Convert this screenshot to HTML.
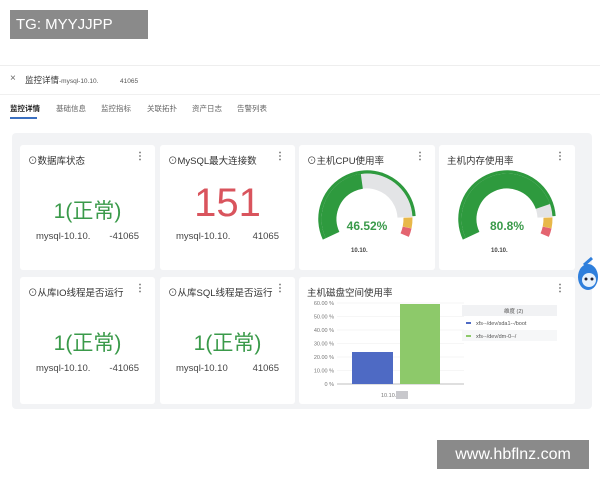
<!DOCTYPE html>
<html><head><meta charset="utf-8"><style>
*{margin:0;padding:0;box-sizing:border-box}
body{width:600px;height:480px;background:#fff;position:relative;overflow:hidden;font-family:"Liberation Sans","Noto Sans CJK SC",sans-serif;color:#333}
.a{position:absolute}
.card{position:absolute;background:#fff;border-radius:3px}
.t{position:absolute;left:8px;top:8px;font-size:9.5px;color:#333}
.dots{position:absolute;right:10px;top:6px;font-size:10px;color:#666;font-weight:bold}
.big{position:absolute;left:0;right:0;text-align:center;color:#3a9a4a;font-size:21px}
.sub{position:absolute;left:16px;right:16px;font-size:9.5px;color:#444;display:flex;justify-content:space-between}
</style></head><body>
<div class="a" style="left:10px;top:10px;width:138px;height:29px;background:#8a8a8a;color:#fff;font-size:15px;line-height:29px;padding-left:6px">TG: MYYJJPP</div>
<div class="a" style="left:0;top:65px;width:600px;height:1px;background:#eee"></div>
<div class="a" style="left:10px;top:73px;font-size:10px;color:#666">×</div>
<div class="a" style="left:25px;top:74px;font-size:8.5px;color:#333">监控详情<span style="font-size:6.5px;color:#555">-mysql-10.10. &nbsp; &nbsp; &nbsp; &nbsp; &nbsp; &nbsp;41065</span></div>
<div class="a" style="left:0;top:94px;width:600px;height:1px;background:#f0f0f0"></div>
<div class="a" style="left:10px;top:103px;font-size:7.5px;color:#222;font-weight:bold">监控详情</div>
<div class="a" style="left:10px;top:117px;width:27px;height:2px;background:#3a6fc0"></div>
<div class="a" style="left:56px;top:103px;font-size:7.5px;color:#666">基础信息</div>
<div class="a" style="left:101px;top:103px;font-size:7.5px;color:#666">监控指标</div>
<div class="a" style="left:147px;top:103px;font-size:7.5px;color:#666">关联拓扑</div>
<div class="a" style="left:192px;top:103px;font-size:7.5px;color:#666">资产日志</div>
<div class="a" style="left:237px;top:103px;font-size:7.5px;color:#666">告警列表</div>
<div class="a" style="left:12px;top:133px;width:580px;height:276px;background:#f2f3f5;border-radius:4px"></div>

<div class="card" style="left:20px;top:145px;width:135px;height:125px"><div class="t">⊙数据库状态</div><div class="dots">⋮</div><div class="big" style="top:50px">1(正常)</div><div class="sub" style="top:86px"><span>mysql-10.10.</span><span>-41065</span></div></div>
<div class="card" style="left:160px;top:145px;width:135px;height:125px"><div class="t">⊙MySQL最大连接数</div><div class="dots">⋮</div><div class="big" style="top:36px;font-size:40px;color:#d9545d">151</div><div class="sub" style="top:86px"><span>mysql-10.10.</span><span>41065</span></div></div>

<div class="card" style="left:299px;top:145px;width:136px;height:125px"><div class="t">⊙主机CPU使用率</div><div class="dots">⋮</div>
<svg class="a" style="left:0;top:0" width="136" height="125"><g transform="translate(68,74)">
<circle r="47" fill="none" stroke="#2e9a3e" stroke-width="3.5" stroke-dasharray="165 400" transform="rotate(155)"/>
<circle r="38" fill="none" stroke="#e3e4e6" stroke-width="15" stroke-dasharray="134 400" transform="rotate(155)"/>
<circle r="38" fill="none" stroke="#2e9a3e" stroke-width="15" stroke-dasharray="71 400" transform="rotate(155)"/>
<circle r="41" fill="none" stroke="#e8b84a" stroke-width="9" stroke-dasharray="10 400" transform="rotate(358)"/>
<circle r="41" fill="none" stroke="#e46470" stroke-width="9" stroke-dasharray="8 400" transform="rotate(372)"/>
</g><text x="68" y="85" text-anchor="middle" font-size="12" font-weight="bold" fill="#3a9a4a" font-family="Liberation Sans">46.52%</text>
<text x="52" y="107" font-size="6" fill="#444" font-weight="bold" font-family="Liberation Sans">10.10.</text></svg></div>

<div class="card" style="left:439px;top:145px;width:136px;height:125px"><div class="t">主机内存使用率</div><div class="dots">⋮</div>
<svg class="a" style="left:0;top:0" width="136" height="125"><g transform="translate(68,74)">
<circle r="47" fill="none" stroke="#2e9a3e" stroke-width="3.5" stroke-dasharray="165 400" transform="rotate(155)"/>
<circle r="38" fill="none" stroke="#e3e4e6" stroke-width="15" stroke-dasharray="134 400" transform="rotate(155)"/>
<circle r="38" fill="none" stroke="#2e9a3e" stroke-width="15" stroke-dasharray="123 400" transform="rotate(155)"/>
<circle r="41" fill="none" stroke="#e8b84a" stroke-width="9" stroke-dasharray="10 400" transform="rotate(358)"/>
<circle r="41" fill="none" stroke="#e46470" stroke-width="9" stroke-dasharray="8 400" transform="rotate(372)"/>
</g><text x="68" y="85" text-anchor="middle" font-size="12" font-weight="bold" fill="#3a9a4a" font-family="Liberation Sans">80.8%</text>
<text x="52" y="107" font-size="6" fill="#444" font-weight="bold" font-family="Liberation Sans">10.10.</text></svg></div>

<div class="card" style="left:20px;top:277px;width:135px;height:127px"><div class="t">⊙从库IO线程是否运行</div><div class="dots">⋮</div><div class="big" style="top:50px">1(正常)</div><div class="sub" style="top:86px"><span>mysql-10.10.</span><span>-41065</span></div></div>
<div class="card" style="left:160px;top:277px;width:135px;height:127px"><div class="t">⊙从库SQL线程是否运行</div><div class="dots">⋮</div><div class="big" style="top:50px">1(正常)</div><div class="sub" style="top:86px"><span>mysql-10.10</span><span>41065</span></div></div>

<div class="card" style="left:299px;top:277px;width:276px;height:127px"><div class="t">主机磁盘空间使用率</div><div class="dots">⋮</div>
<svg class="a" style="left:0;top:0" width="276" height="127" font-family="Liberation Sans" font-size="5.5" fill="#777">
<g stroke="#eee" stroke-width="0.6"><line x1="38" y1="26" x2="165" y2="26"/><line x1="38" y1="39.5" x2="165" y2="39.5"/><line x1="38" y1="53" x2="165" y2="53"/><line x1="38" y1="66.5" x2="165" y2="66.5"/><line x1="38" y1="80" x2="165" y2="80"/><line x1="38" y1="93.5" x2="165" y2="93.5"/></g>
<line x1="38" y1="107" x2="165" y2="107" stroke="#aaa" stroke-width="0.8"/>
<text x="35" y="28" text-anchor="end">60.00 %</text><text x="35" y="41.5" text-anchor="end">50.00 %</text><text x="35" y="55" text-anchor="end">40.00 %</text><text x="35" y="68.5" text-anchor="end">30.00 %</text><text x="35" y="82" text-anchor="end">20.00 %</text><text x="35" y="95.5" text-anchor="end">10.00 %</text><text x="35" y="109" text-anchor="end">0 %</text>
<rect x="53" y="75" width="41" height="32" fill="#4e6ac4"/>
<rect x="101" y="27" width="40" height="80" fill="#8dc96a"/>
<text x="82" y="120">10.10.</text><rect x="97" y="114" width="12" height="8" fill="#c8c8cc"/>
<rect x="163" y="28" width="95" height="11" fill="#f1f2f4"/><text x="205" y="36" fill="#555">维度 (2)</text>
<rect x="167" y="45" width="5" height="2" fill="#4e6ac4"/><text x="177" y="48" fill="#555">xfs--/dev/sda1--/boot</text>
<rect x="163" y="53" width="95" height="11" fill="#f6f7f8"/>
<rect x="167" y="58" width="5" height="2" fill="#8dc96a"/><text x="177" y="61" fill="#555">xfs--/dev/dm-0--/</text>
</svg></div>

<svg class="a" style="left:574px;top:255px" width="26" height="40"><ellipse cx="14" cy="22" rx="10" ry="13" fill="#2f7fdc"/><ellipse cx="15" cy="25" rx="7" ry="7" fill="#e8f2fc"/><circle cx="12" cy="24" r="1.5" fill="#223"/><circle cx="18" cy="24" r="1.5" fill="#223"/><path d="M10 10 L18 3" stroke="#2f7fdc" stroke-width="3"/></svg>

<div class="a" style="left:437px;top:440px;width:152px;height:29px;background:#8a8a8a;color:#fff;font-size:16px;line-height:29px;text-align:center">www.hbflnz.com</div>
</body></html>
